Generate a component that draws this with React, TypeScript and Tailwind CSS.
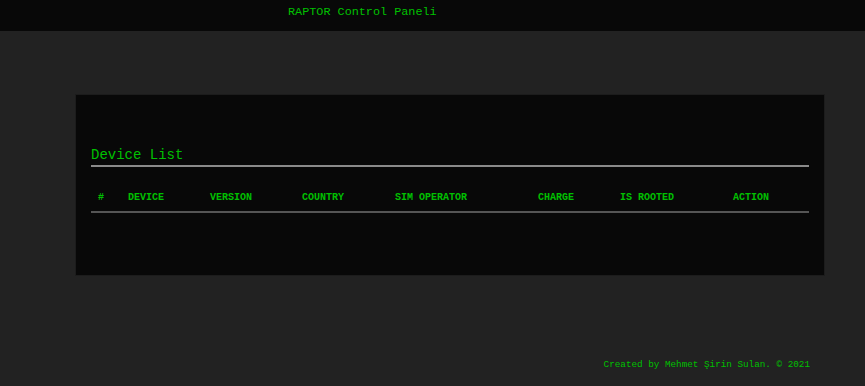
import React from 'react'

const columns = ['#', 'DEVICE', 'VERSION', 'COUNTRY', 'SIM OPERATOR', 'CHARGE', 'IS ROOTED', 'ACTION']

const mono = { fontFamily: '"Liberation Mono", "DejaVu Sans Mono", monospace' }

export default function App() {
    return (
        <div className="min-h-[386px] bg-[#222222] text-[#00c000]" style={mono}>
            <header className="h-[31px] bg-[#080808] flex items-center pl-[288px] pb-[6px]">
                <span className="text-[11.8px] leading-none">RAPTOR Control Paneli</span>
            </header>

            <main className="pt-[63px] pl-[75px]">
                <div className="w-[750px] h-[182px] bg-[#080808] border border-[#1c1c1c] px-[15px] pt-[50px]">
                    <h2 className="text-[14px] leading-[20px]">Device List</h2>
                    <div className="h-[2px] bg-[#8a8a8a]" />
                    <div className="grid grid-cols-[30px_82px_92px_93px_143px_82px_113px_1fr] pl-[7px] h-[44px] items-center pt-[17px]">
                        {columns.map((col) => (
                            <span key={col} className="text-[10px] font-bold leading-none">{col}</span>
                        ))}
                    </div>
                    <div className="h-[2px] bg-[#555555]" />
                </div>
            </main>

            <footer className="flex justify-end pr-[55px] pt-[84px]">
                <span className="text-[9.3px] leading-none">Created by Mehmet Şirin Sulan. © 2021</span>
            </footer>
        </div>
    )
}
